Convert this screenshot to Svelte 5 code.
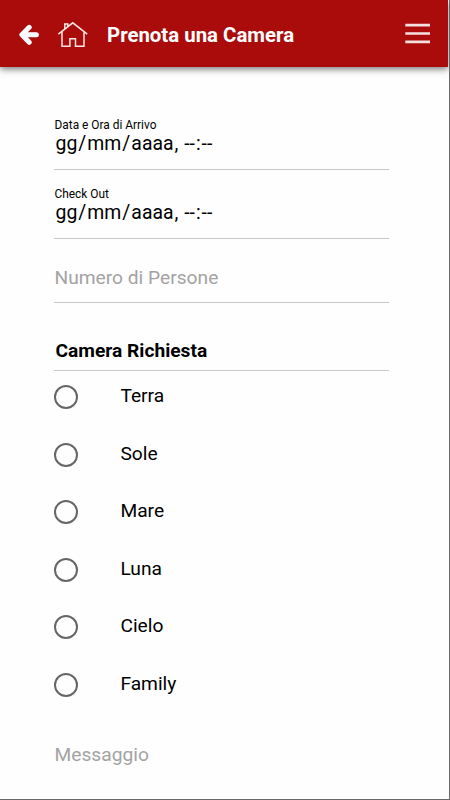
<script lang="ts">
	const dates = ['Data e Ora di Arrivo', 'Check Out'];
	const rooms = ['Terra', 'Sole', 'Mare', 'Luna', 'Cielo', 'Family'];

	let selected = $state('');
</script>

<div class="screen">
	<header>
		<button class="back" aria-label="Indietro">
			<svg width="20" height="22" viewBox="0 0 20 22">
				<path d="M10.2 3.3 L2.9 10.8 L10.2 18.3 M4 10.8 H17.4" />
			</svg>
		</button>
		<button class="home" aria-label="Home">
			<svg width="32" height="28" viewBox="0 0 32 28">
				<path
					d="M1.4 13.2 L15.8 1.8 L30.2 13.2 M7.8 8 V2.9 H10.8 V5.6 M5 10.6 V25.3 H12.9 V17.7 H18.5 V25.3 H27 V10.6"
				/>
			</svg>
		</button>
		<h1>Prenota una Camera</h1>
		<button class="menu" aria-label="Menu">
			<svg width="25" height="21" viewBox="0 0 25 21">
				<path d="M0.3 2.1 H25 M0.3 10.5 H25 M0.3 18.8 H25" />
			</svg>
		</button>
	</header>

	<form>
		{#each dates as label}
			<div class="field date">
				<span class="label">{label}</span>
				<span class="value"
					><span>gg</span>/<span>mm</span>/<span>aaaa</span>, <span>--</span>:<span>--</span></span
				>
			</div>
		{/each}
		<div class="field people">Numero di Persone</div>
		<h2>Camera Richiesta</h2>
		<div class="rooms">
			{#each rooms as room}
				<label>
					<input type="radio" name="room" value={room} bind:group={selected} />
					<span>{room}</span>
				</label>
			{/each}
		</div>
		<div class="message">Messaggio</div>
	</form>
</div>

<style>
	.screen {
		box-sizing: border-box;
		width: 450px;
		height: 800px;
		overflow: hidden;
		padding-right: 1px;
		border-right: 1px solid #696969;
		border-bottom: 1px solid #696969;
		background: #fefefe;
		color: #000;
		font-family: Roboto, sans-serif;
		font-size: 19.2px;
	}

	header {
		display: flex;
		align-items: center;
		box-sizing: border-box;
		height: 67px;
		padding: 0 18px 0 19px;
		background: #aa0c0c;
		box-shadow: 0 2px 7px rgba(0, 0, 0, 0.55);
	}

	button {
		padding: 0;
		border: none;
		background: none;
	}

	svg {
		display: block;
		fill: none;
		stroke: #fff;
	}

	.back svg {
		margin-top: 2px;
		stroke-width: 5;
		stroke-linecap: round;
		stroke-linejoin: round;
	}

	.home {
		margin: 2px 18px 0 18px;
	}

	.home svg {
		stroke-width: 1.5;
		stroke: #fbe6e2;
	}

	h1 {
		flex: 1;
		margin: 2px 0 0;
		color: #fff;
		font-size: 20.4px;
		font-weight: 700;
		line-height: 24px;
		white-space: nowrap;
	}

	.menu svg {
		stroke: #f6dfe0;
		stroke-width: 2.7;
	}

	form {
		width: 335px;
		padding: 50px 0 0 54px;
	}

	.field {
		box-sizing: border-box;
		border-bottom: 1px solid #c8c8c8;
	}

	.date {
		display: flex;
		flex-direction: column;
		height: 53px;
		margin-bottom: 16px;
	}

	.label {
		padding: 1px 0 0 0.5px;
		font-size: 11.9px;
		line-height: 14px;
	}

	.value {
		padding-left: 0.5px;
		font-size: 19.4px;
		line-height: 24px;
		white-space: nowrap;
	}

	.value span {
		padding: 0 1px;
	}

	.people {
		height: 48px;
		padding: 11px 0 0 0.5px;
		line-height: 24px;
		color: #a3a3a3;
	}

	h2 {
		box-sizing: border-box;
		height: 68px;
		margin: 0;
		padding: 36px 0 0 1.5px;
		border-bottom: 1px solid #c8c8c8;
		font-size: 19.2px;
		font-weight: 700;
		line-height: 24px;
	}

	label {
		display: flex;
		box-sizing: border-box;
		height: 57.5px;
		padding: 14.4px 0 0 0.4px;
	}

	input {
		appearance: none;
		box-sizing: border-box;
		width: 24px;
		height: 24px;
		margin: 0 42px 0 0;
		border: 2px solid #666;
		border-radius: 50%;
	}

	input:checked {
		box-shadow: inset 0 0 0 4px #fefefe;
		background: #aa0c0c;
	}

	label span {
		margin-top: -1.1px;
		line-height: 24px;
	}

	.message {
		padding: 27px 0 0 0.5px;
		color: #a3a3a3;
		line-height: 24px;
	}
</style>
